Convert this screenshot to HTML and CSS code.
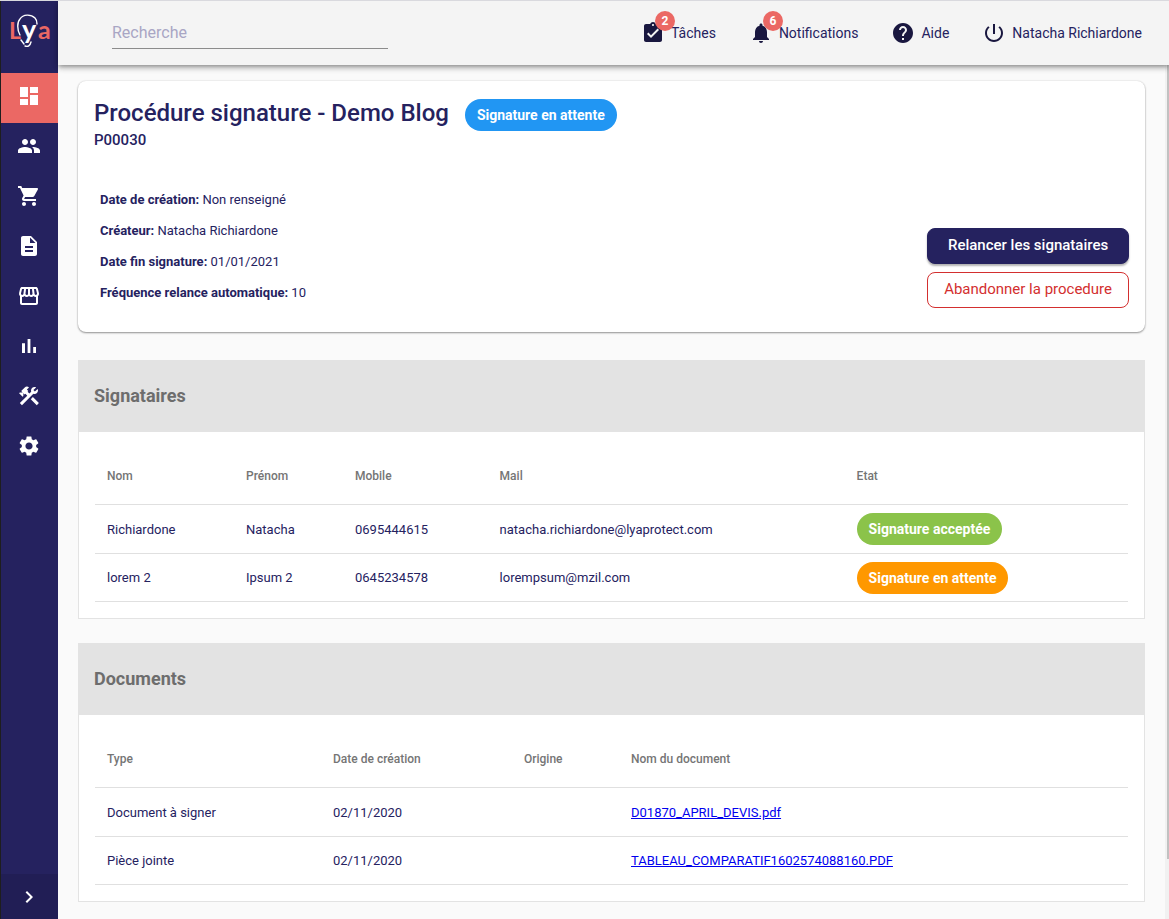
FILE: index.html
```html
<!DOCTYPE html>
<html lang="fr">
<head>
  <meta charset="UTF-8" />
  <meta name="viewport" content="width=device-width, initial-scale=1.0"/>
  <title>Procédure signature - Demo Blog</title>
  <link rel="stylesheet" href="styles.css">
</head>
<body>

  <nav class="sidebar" aria-label="Menu principal">
    <a class="logo" href="#" aria-label="Lya">
      <svg width="44" height="60" viewBox="0 0 44 60">
        <g fill="none" stroke="#fff" stroke-width="1.400" stroke-linecap="round">
          <path d="M11 30C8 25 8 17 11 14C14 9 22 9 26 13C28 15 28 17 28 19"/>
          <path d="M12 35L15 39"/>
          <path d="M16 41C19 42 21 41 22 37"/>
        </g>
        <text class="logo-coral" x="0" y="34" font-size="23">L</text>
        <text class="logo-white" x="13" y="34" font-size="27">y</text>
        <text class="logo-coral" x="29" y="34" font-size="25">a</text>
      </svg>
    </a>
    <a class="nav-item active" href="#" aria-label="Tableau de bord">
      <svg viewBox="0 0 24 24"><path d="M3 13h8V3H3v10zm0 8h8v-6H3v6zm10 0h8V11h-8v10zm0-18v6h8V3h-8z"/></svg>
    </a>
    <a class="nav-item" href="#" aria-label="Clients">
      <svg viewBox="0 0 24 24"><path d="M16 11c1.66 0 2.99-1.34 2.99-3S17.66 5 16 5s-3 1.34-3 3 1.34 3 3 3zm-8 0c1.66 0 2.99-1.34 2.99-3S9.66 5 8 5 5 6.340 5 8s1.340 3 3 3zm0 2c-2.330 0-7 1.170-7 3.500V19h14v-2.500C15 14.170 10.330 13 8 13zm8 0c-.29 0-.62.02-.97.05 1.160.84 1.970 1.970 1.970 3.450V19h6v-2.500c0-2.330-4.670-3.500-7-3.500z"/></svg>
    </a>
    <a class="nav-item" href="#" aria-label="Ventes">
      <svg viewBox="0 0 24 24"><path d="M7 18c-1.100 0-1.990.9-1.990 2S5.900 22 7 22s2-.9 2-2-.9-2-2-2zM1 2v2h2l3.600 7.590-1.350 2.450c-.16.28-.25.61-.25.96 0 1.100.9 2 2 2h12v-2H7.420c-.14 0-.25-.11-.25-.25l.03-.12.9-1.630h7.450c.75 0 1.410-.41 1.750-1.030l3.580-6.490c.08-.14.12-.31.12-.48 0-.55-.45-1-1-1H5.210l-.94-2H1zm16 16c-1.100 0-1.990.9-1.990 2s.89 2 1.990 2 2-.9 2-2-.9-2-2-2z"/></svg>
    </a>
    <a class="nav-item" href="#" aria-label="Documents">
      <svg viewBox="0 0 24 24"><path d="M14 2H6c-1.100 0-1.990.9-1.990 2L4 20c0 1.100.89 2 1.990 2H18c1.100 0 2-.9 2-2V8l-6-6zm2 16H8v-2h8v2zm0-4H8v-2h8v2zm-3-5V3.500L18.500 9H13z"/></svg>
    </a>
    <a class="nav-item" href="#" aria-label="Boutique">
      <svg viewBox="0 0 24 24"><path d="M21.900 8.890l-1.050-4.370c-.22-.9-1-1.520-1.910-1.520H5.050c-.9 0-1.690.63-1.900 1.520L2.100 8.890c-.24 1.020-.02 2.060.62 2.880.08.11.19.19.28.29V19c0 1.100.9 2 2 2h14c1.100 0 2-.9 2-2v-6.940c.09-.09.2-.18.28-.28.64-.82.87-1.870.62-2.890zM18.910 4.990l1.050 4.370c.1.42.01.84-.25 1.170-.14.18-.44.47-.94.47-.61 0-1.140-.49-1.210-1.140L16.980 5l1.930-.01zM13 5h1.960l.54 4.520c.05.39-.07.78-.33 1.070-.22.26-.54.41-.95.41-.67 0-1.220-.59-1.220-1.310V5zM8.490 9.520L9.040 5H11v4.690c0 .72-.55 1.310-1.290 1.310-.34 0-.65-.15-.89-.41-.25-.29-.37-.68-.33-1.070zM4.040 9.360L5.050 5h1.970l-.58 4.860c-.08.65-.6 1.140-1.210 1.140-.49 0-.8-.29-.93-.47-.27-.32-.36-.75-.26-1.170zM5 19v-6.030c.08.01.15.03.23.03.87 0 1.660-.36 2.240-.95.6.6 1.400.95 2.310.95.87 0 1.650-.36 2.230-.93.59.57 1.390.93 2.290.93.84 0 1.640-.35 2.240-.95.58.59 1.370.95 2.240.95.08 0 .15-.02.23-.03V19H5z"/></svg>
    </a>
    <a class="nav-item" href="#" aria-label="Statistiques">
      <svg viewBox="0 0 24 24"><path d="M5 9.200h3V19H5zM10.600 5h2.800v14h-2.800zm5.600 8H19v6h-2.800z"/></svg>
    </a>
    <a class="nav-item" href="#" aria-label="Outils">
      <svg viewBox="0 0 24 24"><path d="M13.783 15.172l2.121-2.121 5.996 5.996-2.121 2.121zM17.500 10c1.930 0 3.500-1.570 3.500-3.500 0-.58-.16-1.120-.41-1.600l-2.700 2.700-1.490-1.490 2.700-2.700c-.48-.25-1.020-.41-1.600-.41C15.570 3 14 4.570 14 6.500c0 .41.08.8.21 1.160l-1.850 1.850-1.780-1.780.71-.71-1.410-1.410L12 3.490c-1.170-1.170-3.070-1.170-4.240 0L4.220 7.030l1.410 1.410H2.810l-.71.71 3.540 3.540.71-.71V9.150l1.410 1.410.71-.71 1.780 1.780-7.410 7.410 2.120 2.120L16.340 9.790c.36.13.75.21 1.160.21z"/></svg>
    </a>
    <a class="nav-item" href="#" aria-label="Paramètres">
      <svg viewBox="0 0 24 24"><path d="M19.140 12.940c.04-.3.06-.61.06-.94 0-.32-.02-.64-.07-.94l2.030-1.580c.18-.14.23-.41.12-.61l-1.920-3.320c-.12-.22-.37-.29-.59-.22l-2.390.96c-.5-.38-1.030-.7-1.620-.94l-.36-2.540c-.04-.24-.24-.41-.48-.41h-3.840c-.24 0-.43.17-.47.41l-.36 2.540c-.59.24-1.130.57-1.620.94l-2.390-.96c-.22-.08-.47 0-.59.22L2.740 8.870c-.12.21-.08.47.12.61l2.030 1.580c-.05.3-.09.63-.09.94s.02.64.07.94l-2.030 1.580c-.18.14-.23.41-.12.61l1.920 3.320c.12.22.37.29.59.22l2.390-.96c.5.38 1.030.7 1.620.94l.36 2.540c.05.24.24.41.48.41h3.840c.24 0 .44-.17.47-.41l.36-2.540c.59-.24 1.130-.56 1.620-.94l2.390.96c.22.08.47 0 .59-.22l1.920-3.320c.12-.22.07-.47-.12-.61l-2.010-1.580zM12 15.600c-1.980 0-3.600-1.620-3.600-3.600s1.620-3.600 3.600-3.600 3.600 1.620 3.600 3.600-1.620 3.600-3.600 3.600z"/></svg>
    </a>
    <button class="sidebar-toggle" type="button" aria-label="Déplier le menu">
      <svg viewBox="0 0 24 24"><path d="M10 6L8.590 7.410 13.170 12l-4.580 4.590L10 18l6-6z"/></svg>
    </button>
  </nav>

  <div class="page">
    <header class="topbar">
      <input class="search" type="text" placeholder="Recherche" aria-label="Recherche">
      <div class="topbar-links">
        <a href="#">
          <svg viewBox="0 0 24 24"><path d="M19 3h-4.180C14.400 1.840 13.300 1 12 1c-1.300 0-2.400.84-2.820 2H5c-1.100 0-2 .9-2 2v14c0 1.100.9 2 2 2h14c1.100 0 2-.9 2-2V5c0-1.100-.9-2-2-2zm-7 0c.55 0 1 .45 1 1s-.45 1-1 1-1-.45-1-1 .45-1 1-1zm-2 14l-4-4 1.410-1.410L10 14.170l6.590-6.590L18 9l-8 8z"/></svg>
          <span class="count">2</span>
          Tâches
        </a>
        <a href="#">
          <svg viewBox="0 0 24 24"><path d="M12 22c1.100 0 2-.9 2-2h-4c0 1.100.89 2 2 2zm6-6v-5c0-3.070-1.640-5.640-4.500-6.320V4c0-.83-.67-1.500-1.500-1.500s-1.500.67-1.500 1.500v.68C7.630 5.360 6 7.920 6 11v5l-2 2v1h16v-1l-2-2z"/></svg>
          <span class="count">6</span>
          Notifications
        </a>
        <a href="#">
          <svg viewBox="0 0 24 24"><path d="M12 2C6.480 2 2 6.480 2 12s4.480 10 10 10 10-4.480 10-10S17.520 2 12 2zm1 17h-2v-2h2v2zm2.070-7.750l-.9.920C13.450 12.900 13 13.500 13 15h-2v-.5c0-1.100.45-2.100 1.170-2.830l1.240-1.260c.37-.36.59-.86.59-1.410 0-1.100-.9-2-2-2s-2 .9-2 2H8c0-2.210 1.790-4 4-4s4 1.790 4 4c0 .88-.36 1.680-.93 2.250z"/></svg>
          Aide
        </a>
        <a href="#">
          <svg viewBox="0 0 24 24"><path d="M13 3h-2v10h2V3zm4.830 2.170l-1.420 1.420C17.990 7.860 19 9.810 19 12c0 3.870-3.130 7-7 7s-7-3.130-7-7c0-2.190 1.010-4.140 2.580-5.420L6.170 5.170C4.230 6.820 3 9.260 3 12c0 4.970 4.030 9 9 9s9-4.030 9-9c0-2.740-1.230-5.180-3.170-6.830z"/></svg>
          Natacha Richiardone
        </a>
      </div>
    </header>

    <div class="viewport">
      <main>
        <section class="card">
          <div class="card-title">
            <h1>Procédure signature - Demo Blog</h1>
            <span class="chip blue">Signature en attente</span>
          </div>
          <p class="reference">P00030</p>
          <div class="card-body">
            <ul class="infos">
              <li><strong>Date de création:</strong> Non renseigné</li>
              <li><strong>Créateur:</strong> Natacha Richiardone</li>
              <li><strong>Date fin signature:</strong> 01/01/2021</li>
              <li><strong>Fréquence relance automatique:</strong> 10</li>
            </ul>
            <div class="actions">
              <button class="btn btn-primary" type="button">Relancer les signataires</button>
              <button class="btn btn-danger" type="button">Abandonner la procedure</button>
            </div>
          </div>
        </section>

        <section class="panel">
          <h2>Signataires</h2>
          <div class="panel-body">
            <table class="signers">
              <thead>
                <tr><th>Nom</th><th>Prénom</th><th>Mobile</th><th>Mail</th><th>Etat</th></tr>
              </thead>
              <tbody>
                <tr>
                  <td>Richiardone</td>
                  <td>Natacha</td>
                  <td>0695444615</td>
                  <td>natacha.richiardone@lyaprotect.com</td>
                  <td><span class="chip green">Signature acceptée</span></td>
                </tr>
                <tr>
                  <td>lorem 2</td>
                  <td>Ipsum 2</td>
                  <td>0645234578</td>
                  <td>lorempsum@mzil.com</td>
                  <td><span class="chip orange">Signature en attente</span></td>
                </tr>
              </tbody>
            </table>
          </div>
        </section>

        <section class="panel">
          <h2>Documents</h2>
          <div class="panel-body">
            <table class="documents">
              <thead>
                <tr><th>Type</th><th>Date de création</th><th>Origine</th><th>Nom du document</th></tr>
              </thead>
              <tbody>
                <tr>
                  <td>Document à signer</td>
                  <td>02/11/2020</td>
                  <td></td>
                  <td><a href="#">D01870_APRIL_DEVIS.pdf</a></td>
                </tr>
                <tr>
                  <td>Pièce jointe</td>
                  <td>02/11/2020</td>
                  <td></td>
                  <td><a href="#">TABLEAU_COMPARATIF1602574088160.PDF</a></td>
                </tr>
              </tbody>
            </table>
          </div>
        </section>
      </main>
      <div class="scroll-track"><div class="scroll-thumb"></div></div>
    </div>
  </div>

</body>
</html>
```
FILE: styles.css
```css
* {
  box-sizing: border-box;
}
body {
  margin: 0;
  min-height: 100vh;
  display: flex;
  border-top: 1px solid #d9d9de;
  background: #fafafa;
  color: #25225f;
  font-family: Roboto, "Liberation Sans", sans-serif;
  font-size: 13px;
}
svg {
  fill: currentColor;
  flex: none;
}

/* Sidebar */
.sidebar {
  display: flex;
  flex-direction: column;
  flex: none;
  width: 58px;
  border-left: 1px solid #1e1e1e;
  background: #25225f;
  color: #fff;
}
.logo {
  height: 72px;
  padding: 4px 0 0 8px;
}
.logo text {
  font-family: Lato, sans-serif;
  font-weight: 700;
}
.logo-coral {
  fill: #eb6864;
}
.logo-white {
  fill: #fff;
}
.nav-item {
  display: flex;
  align-items: center;
  justify-content: center;
  height: 50px;
  padding: 0 1px 4px 0;
  color: #fff;
}
.nav-item.active {
  background: #eb6864;
}
.nav-item svg {
  width: 24px;
  height: 24px;
}
.sidebar-toggle {
  display: flex;
  align-items: center;
  justify-content: center;
  height: 45px;
  margin-top: auto;
  padding: 0 1px 0 0;
  border: none;
  background: #211e55;
  color: #fff;
  cursor: pointer;
}
.sidebar-toggle svg {
  width: 24px;
  height: 24px;
}

/* Top bar */
.page {
  display: flex;
  flex-direction: column;
  flex: 1;
  min-width: 0;
}
.topbar {
  position: relative;
  display: flex;
  align-items: center;
  justify-content: space-between;
  height: 64px;
  padding: 0 27px 0 54px;
  background: #f4f4f4;
  box-shadow: 0 2px 4px -1px rgba(0, 0, 0, 0.3), 0 4px 5px rgba(0, 0, 0, 0.14), 0 1px 8px rgba(0, 0, 0, 0.12);
}
.search {
  width: 276px;
  height: 32px;
  padding: 0;
  border: none;
  border-bottom: 1px solid #8c8c8c;
  background: none;
  color: #25225f;
  font-family: inherit;
  font-size: 16px;
}
.search::placeholder {
  color: #a9a6c4;
}
.topbar-links {
  display: flex;
  gap: 33px;
}
.topbar-links a {
  position: relative;
  display: flex;
  align-items: center;
  gap: 6px;
  color: #25225f;
  font-size: 14px;
  text-decoration: none;
}
.topbar-links svg {
  width: 24px;
  height: 24px;
  color: #19173f;
}
.count {
  position: absolute;
  top: -10px;
  left: 14px;
  width: 20px;
  height: 20px;
  border-radius: 50%;
  background: #eb6864;
  color: #fff;
  font-size: 12px;
  font-weight: 700;
  line-height: 20px;
  text-align: center;
}

/* Content */
.viewport {
  display: flex;
  flex: 1;
}
main {
  flex: 1;
  min-width: 0;
  padding: 16px 20px;
}
.scroll-track {
  width: 4px;
  padding-left: 2px;
  background: #f1f1f1;
}
.scroll-thumb {
  height: 93%;
  background: #c1c1c1;
}
.card {
  margin-bottom: 28px;
  padding: 16px 16px 24px;
  border-radius: 8px;
  background: #fff;
  box-shadow: 0 1px 2px rgba(0, 0, 0, 0.4), 0 0 2px rgba(0, 0, 0, 0.12);
}
.card-title {
  display: flex;
  align-items: flex-start;
  gap: 16px;
}
.card-title .chip {
  margin-top: 2px;
}
h1 {
  margin: 0;
  font-size: 24px;
  font-weight: 500;
  line-height: 32px;
}
.reference {
  margin: 0;
  font-size: 15px;
  font-weight: 500;
  line-height: 18px;
}
.card-body {
  display: flex;
  align-items: flex-end;
  justify-content: space-between;
  margin-top: 35px;
}
.infos {
  margin: 0;
  padding: 0 6px;
  list-style: none;
}
.infos li {
  line-height: 31px;
}
.infos strong {
  font-weight: 700;
}
.actions {
  display: flex;
  flex-direction: column;
  gap: 8px;
}
.btn {
  height: 36px;
  padding: 0 16px 2px;
  border: 1px solid #25225f;
  border-radius: 8px;
  font-family: inherit;
  font-size: 15px;
  font-weight: 500;
  cursor: pointer;
}
.btn-primary {
  background: #25225f;
  color: #fff;
  box-shadow: 0 2px 2px rgba(0, 0, 0, 0.3);
}
.btn-danger {
  border-color: #d32f2f;
  background: #fff;
  color: #d32f2f;
  font-weight: 400;
}
.chip {
  display: inline-block;
  padding: 0 12px;
  border-radius: 16px;
  color: #fff;
  font-size: 14px;
  font-weight: 700;
  line-height: 32px;
  vertical-align: middle;
}
.blue {
  background: #2196f3;
}
.green {
  background: #8bc34a;
}
.orange {
  background: #ff9800;
}

/* Panels */
.panel {
  margin-bottom: 24px;
  border: 1px solid #e3e3e3;
  background: #fff;
}
.panel:last-child {
  margin-bottom: 0;
}
.panel h2 {
  margin: 0;
  padding: 0 15px 2px;
  background: #e3e3e3;
  color: #6d6d6d;
  font-size: 18px;
  font-weight: 700;
  line-height: 69px;
}
.panel-body {
  padding: 16px;
}
table {
  width: 100%;
  table-layout: fixed;
  border-spacing: 0;
}
th, td {
  height: 49px;
  padding: 0 12px;
  border-bottom: 1px solid #e0e0e0;
  text-align: left;
}
th {
  height: 57px;
  color: #757575;
  font-size: 12px;
  font-weight: 500;
}
tr:last-child td {
  height: 48px;
}
thead tr:last-child th {
  height: 57px;
}
td a {
  color: #0000ee;
}
.signers th:nth-child(1) {
  width: 139px;
}
.signers th:nth-child(2) {
  width: 109px;
}
.signers th:nth-child(3) {
  width: 14%;
}
.signers th:nth-child(4) {
  width: 357px;
}
.documents th:nth-child(1) {
  width: 226px;
}
.documents th:nth-child(2) {
  width: 191px;
}
.documents th:nth-child(3) {
  width: 107px;
}
```
